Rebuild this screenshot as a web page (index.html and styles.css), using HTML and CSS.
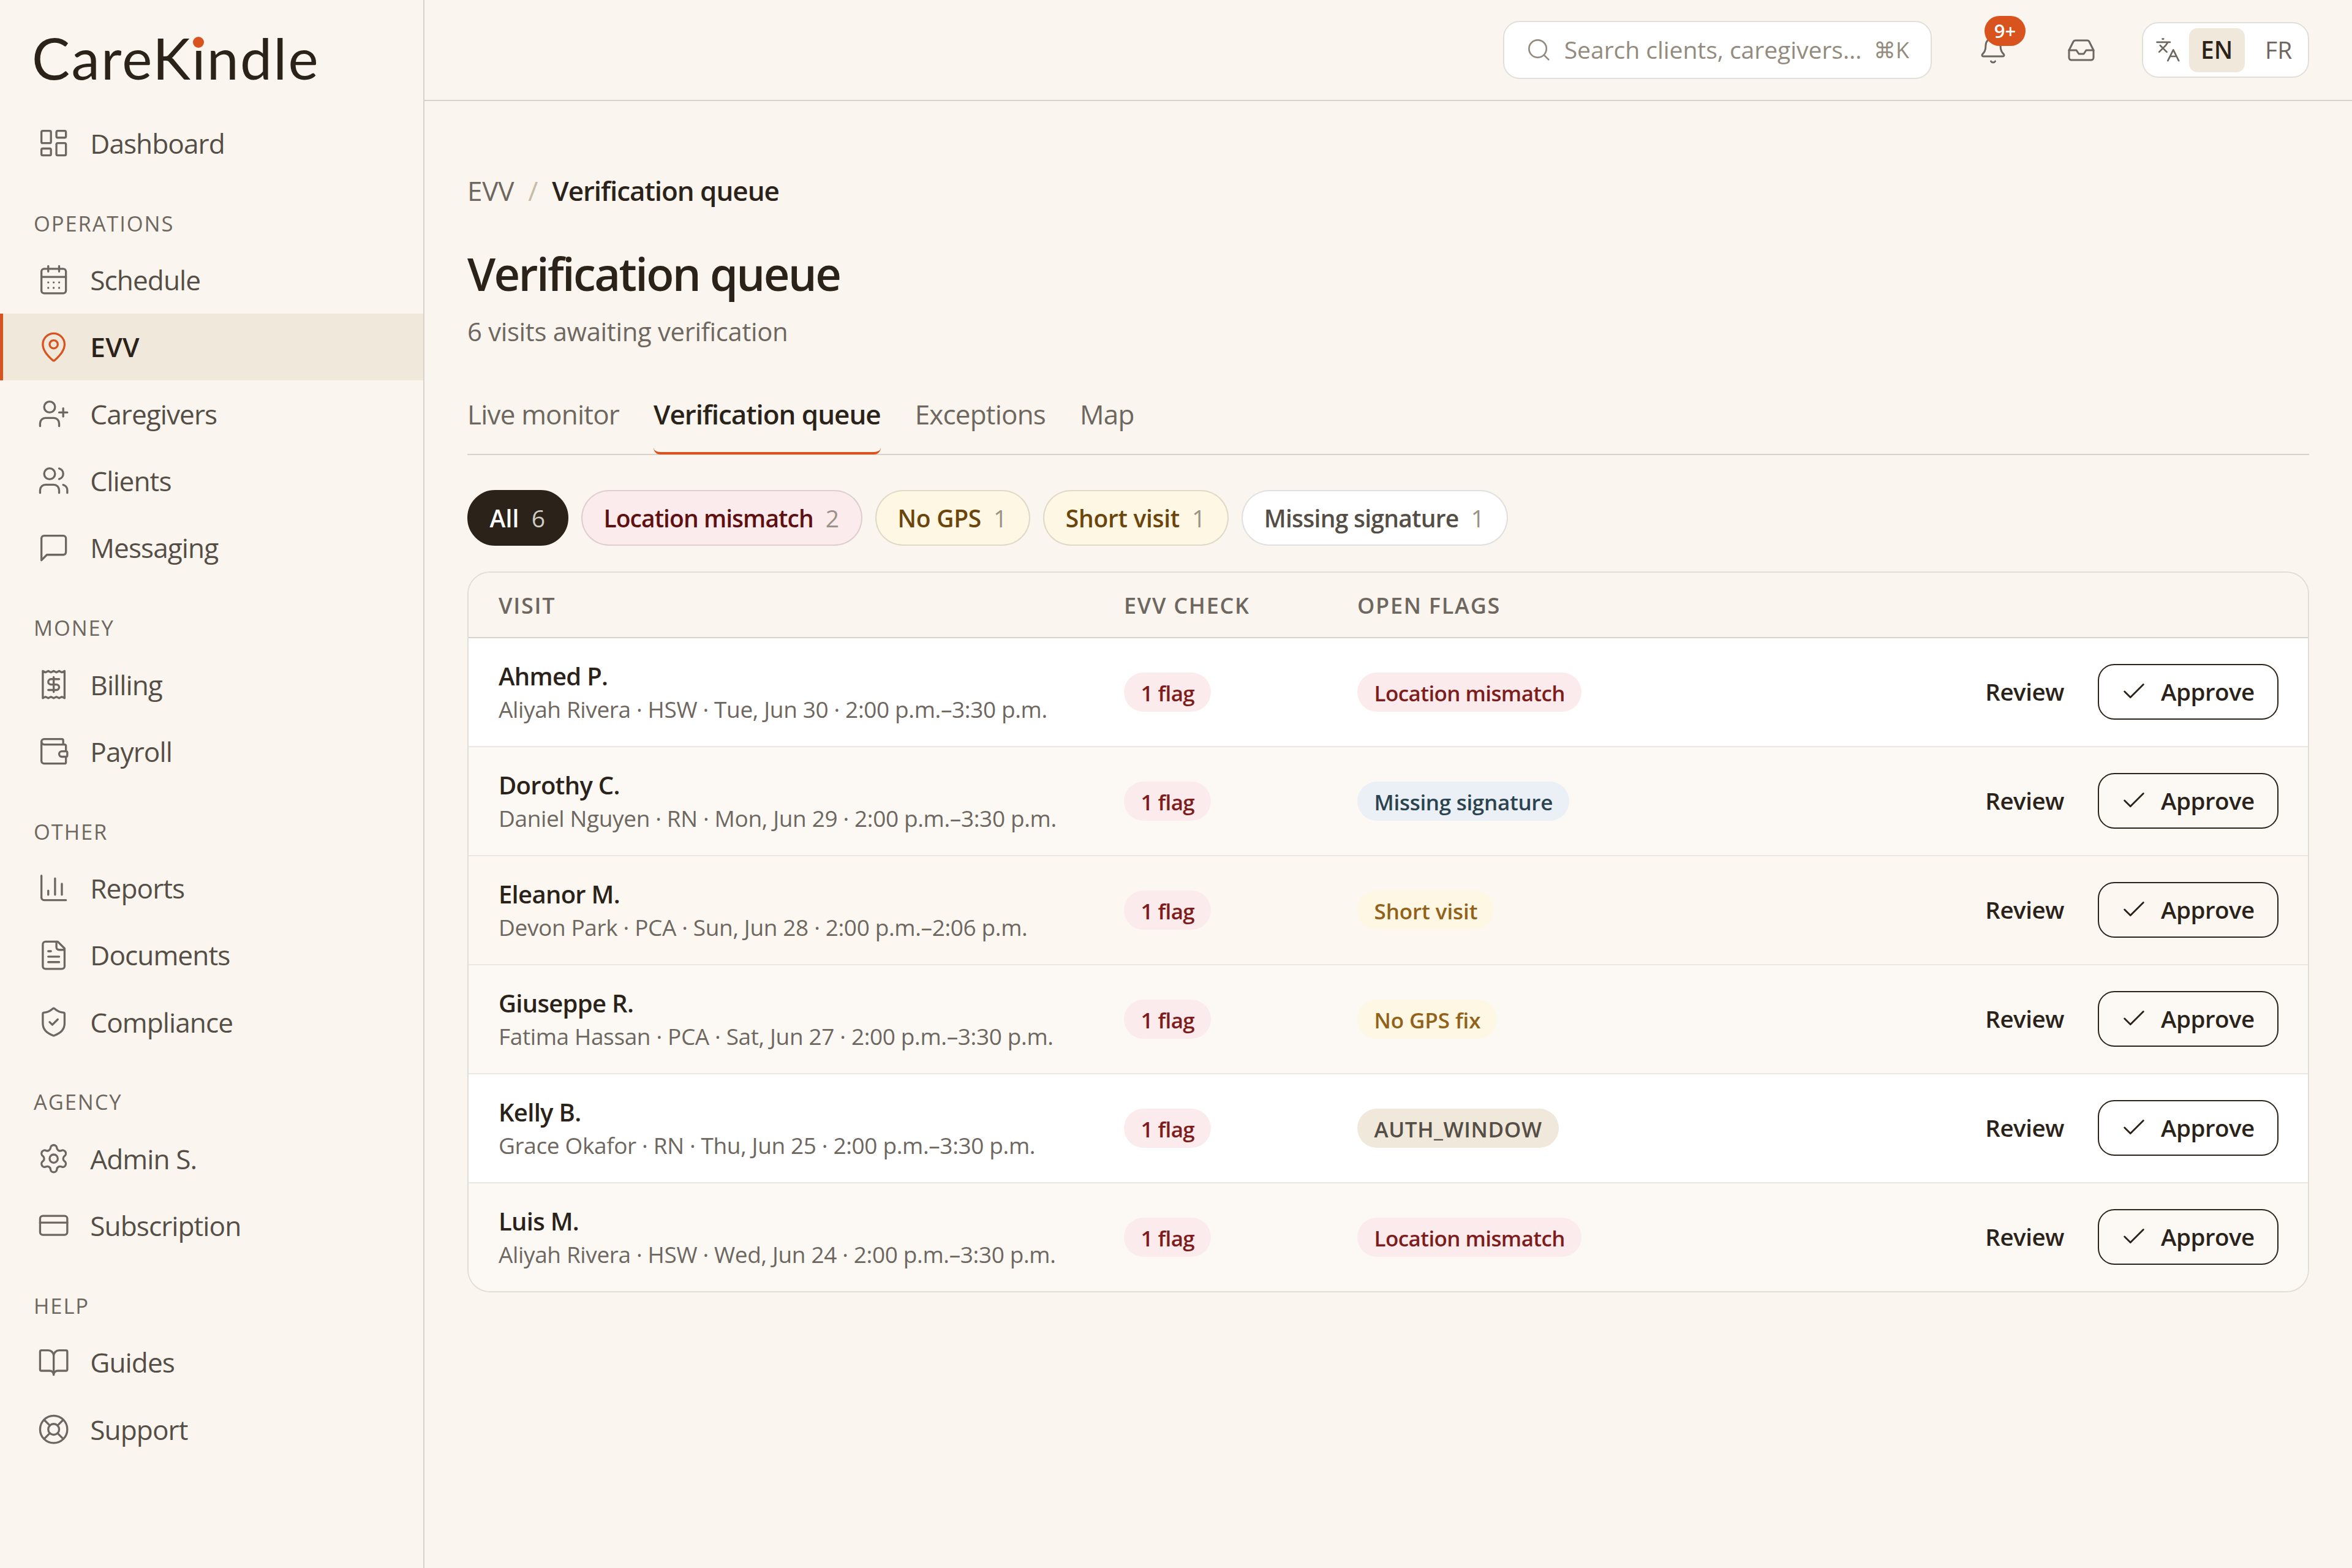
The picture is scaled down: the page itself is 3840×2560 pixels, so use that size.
FILE: index.html
```
<!DOCTYPE html>
<html lang="en">
<head>
<meta charset="utf-8">
<title>CareKindle – Verification queue</title>
<link rel="stylesheet" href="styles.css">
</head>
<body>
<svg class="sprite" aria-hidden="true">
  <symbol id="dashboard" viewBox="0 0 24 24"><rect x="3" y="3" width="7" height="9" rx="1"/><rect x="14" y="3" width="7" height="5" rx="1"/><rect x="14" y="12" width="7" height="9" rx="1"/><rect x="3" y="16" width="7" height="5" rx="1"/></symbol>
  <symbol id="calendar" viewBox="0 0 24 24"><path d="M8 2v4M16 2v4"/><rect x="3" y="4" width="18" height="18" rx="2"/><path d="M3 10h18M8 14h.01M12 14h.01M16 14h.01M8 18h.01M12 18h.01M16 18h.01"/></symbol>
  <symbol id="pin" viewBox="0 0 24 24"><path d="M20 10c0 4.993-5.539 10.193-7.399 11.799a1 1 0 0 1-1.202 0C9.539 20.193 4 14.993 4 10a8 8 0 0 1 16 0"/><circle cx="12" cy="10" r="3"/></symbol>
  <symbol id="user-plus" viewBox="0 0 24 24"><path d="M16 21v-2a4 4 0 0 0-4-4H6a4 4 0 0 0-4 4v2"/><circle cx="9" cy="7" r="4"/><path d="M19 8v6M22 11h-6"/></symbol>
  <symbol id="users" viewBox="0 0 24 24"><path d="M16 21v-2a4 4 0 0 0-4-4H6a4 4 0 0 0-4 4v2"/><circle cx="9" cy="7" r="4"/><path d="M22 21v-2a4 4 0 0 0-3-3.87M16 3.13a4 4 0 0 1 0 7.75"/></symbol>
  <symbol id="message" viewBox="0 0 24 24"><path d="M21 15a2 2 0 0 1-2 2H7l-4 4V5a2 2 0 0 1 2-2h14a2 2 0 0 1 2 2z"/></symbol>
  <symbol id="receipt" viewBox="0 0 24 24"><path d="M4 2v20l2-1 2 1 2-1 2 1 2-1 2 1 2-1 2 1V2l-2 1-2-1-2 1-2-1-2 1-2-1-2 1Z"/><path d="M16 8h-6a2 2 0 1 0 0 4h4a2 2 0 1 1 0 4H8M12 17.5v-11"/></symbol>
  <symbol id="wallet" viewBox="0 0 24 24"><path d="M19 7V4a1 1 0 0 0-1-1H5a2 2 0 0 0 0 4h15a1 1 0 0 1 1 1v4h-3a2 2 0 0 0 0 4h3a1 1 0 0 0 1-1v-2a1 1 0 0 0-1-1"/><path d="M3 5v14a2 2 0 0 0 2 2h15a1 1 0 0 0 1-1v-4"/></symbol>
  <symbol id="chart" viewBox="0 0 24 24"><path d="M3 3v16a2 2 0 0 0 2 2h16M18 17V9M13 17V5M8 17v-3"/></symbol>
  <symbol id="file" viewBox="0 0 24 24"><path d="M15 2H6a2 2 0 0 0-2 2v16a2 2 0 0 0 2 2h12a2 2 0 0 0 2-2V7Z"/><path d="M14 2v4a2 2 0 0 0 2 2h4M10 9H8M16 13H8M16 17H8"/></symbol>
  <symbol id="shield" viewBox="0 0 24 24"><path d="M20 13c0 5-3.5 7.5-7.66 8.95a1 1 0 0 1-.67-.01C7.5 20.5 4 18 4 13V6a1 1 0 0 1 1-1c2 0 4.5-1.2 6.24-2.72a1.17 1.17 0 0 1 1.52 0C14.51 3.81 17 5 19 5a1 1 0 0 1 1 1z"/><path d="m9 12 2 2 4-4"/></symbol>
  <symbol id="gear" viewBox="0 0 24 24"><path d="M9.671 4.136a2.34 2.34 0 0 1 4.659 0 2.34 2.34 0 0 0 3.319 1.915 2.34 2.34 0 0 1 2.33 4.033 2.34 2.34 0 0 0 0 3.831 2.34 2.34 0 0 1-2.33 4.033 2.34 2.34 0 0 0-3.319 1.915 2.34 2.34 0 0 1-4.659 0 2.34 2.34 0 0 0-3.32-1.915 2.34 2.34 0 0 1-2.33-4.033 2.34 2.34 0 0 0 0-3.831A2.34 2.34 0 0 1 6.35 6.051a2.34 2.34 0 0 0 3.319-1.915"/><circle cx="12" cy="12" r="3"/></symbol>
  <symbol id="card" viewBox="0 0 24 24"><rect x="2" y="5" width="20" height="14" rx="2"/><path d="M2 10h20"/></symbol>
  <symbol id="book" viewBox="0 0 24 24"><path d="M12 7v14M3 18a1 1 0 0 1-1-1V4a1 1 0 0 1 1-1h5a4 4 0 0 1 4 4 4 4 0 0 1 4-4h5a1 1 0 0 1 1 1v13a1 1 0 0 1-1 1h-6a3 3 0 0 0-3 3 3 3 0 0 0-3-3z"/></symbol>
  <symbol id="buoy" viewBox="0 0 24 24"><circle cx="12" cy="12" r="10"/><path d="m4.93 4.93 4.24 4.24M14.83 9.17l4.24-4.24M14.83 14.83l4.24 4.24M9.17 14.83l-4.24 4.24"/><circle cx="12" cy="12" r="4"/></symbol>
  <symbol id="search" viewBox="0 0 24 24"><circle cx="11" cy="11" r="8"/><path d="m21 21-4.3-4.3"/></symbol>
  <symbol id="bell" viewBox="0 0 24 24"><path d="M10.268 21a2 2 0 0 0 3.464 0M3.262 15.326A1 1 0 0 0 4 17h16a1 1 0 0 0 .74-1.673C19.41 13.956 18 12.499 18 8A6 6 0 0 0 6 8c0 4.499-1.411 5.956-2.738 7.326"/></symbol>
  <symbol id="inbox" viewBox="0 0 24 24"><path d="M22 12h-6l-2 3h-4l-2-3H2"/><path d="M5.45 5.11 2 12v6a2 2 0 0 0 2 2h16a2 2 0 0 0 2-2v-6l-3.45-6.89A2 2 0 0 0 16.76 4H7.24a2 2 0 0 0-1.79 1.11z"/></symbol>
  <symbol id="languages" viewBox="0 0 24 24"><path d="m5 8 6 6M4 14l6-6 2-3M2 5h12M7 2h1M22 22l-5-10-5 10M14 18h6"/></symbol>
  <symbol id="check" viewBox="0 0 24 24"><path d="M20 6 9 17l-5-5"/></symbol>
</svg>

<div class="app">
  <aside class="sidebar">
    <div class="logo">CareK<span class="logo-i">i</span>ndle</div>
    <nav>
      <a class="nav-item"><svg class="icon"><use href="#dashboard"/></svg>Dashboard</a>
      <h2 class="nav-heading">OPERATIONS</h2>
      <a class="nav-item"><svg class="icon"><use href="#calendar"/></svg>Schedule</a>
      <a class="nav-item active"><svg class="icon"><use href="#pin"/></svg>EVV</a>
      <a class="nav-item"><svg class="icon"><use href="#user-plus"/></svg>Caregivers</a>
      <a class="nav-item"><svg class="icon"><use href="#users"/></svg>Clients</a>
      <a class="nav-item"><svg class="icon"><use href="#message"/></svg>Messaging</a>
      <h2 class="nav-heading">MONEY</h2>
      <a class="nav-item"><svg class="icon"><use href="#receipt"/></svg>Billing</a>
      <a class="nav-item"><svg class="icon"><use href="#wallet"/></svg>Payroll</a>
      <h2 class="nav-heading">OTHER</h2>
      <a class="nav-item"><svg class="icon"><use href="#chart"/></svg>Reports</a>
      <a class="nav-item"><svg class="icon"><use href="#file"/></svg>Documents</a>
      <a class="nav-item"><svg class="icon"><use href="#shield"/></svg>Compliance</a>
      <h2 class="nav-heading">AGENCY</h2>
      <a class="nav-item"><svg class="icon"><use href="#gear"/></svg>Admin S.</a>
      <a class="nav-item"><svg class="icon"><use href="#card"/></svg>Subscription</a>
      <h2 class="nav-heading">HELP</h2>
      <a class="nav-item"><svg class="icon"><use href="#book"/></svg>Guides</a>
      <a class="nav-item"><svg class="icon"><use href="#buoy"/></svg>Support</a>
    </nav>
  </aside>

  <div class="page">
    <header class="topbar">
      <div class="search">
        <svg class="icon"><use href="#search"/></svg>
        <span class="placeholder">Search clients, caregivers…</span>
        <kbd>⌘K</kbd>
      </div>
      <div class="bell"><svg class="icon"><use href="#bell"/></svg><span class="bell-count">9+</span></div>
      <div class="inbox"><svg class="icon"><use href="#inbox"/></svg></div>
      <div class="lang">
        <svg class="icon"><use href="#languages"/></svg>
        <span class="lang-option selected">EN</span>
        <span class="lang-option">FR</span>
      </div>
    </header>

    <main>
      <div class="breadcrumb"><span>EVV</span><span class="slash">/</span><span class="current">Verification queue</span></div>
      <h1>Verification queue</h1>
      <p class="subtitle">6 visits awaiting verification</p>
      <div class="tabs">
        <span class="tab">Live monitor</span>
        <span class="tab current">Verification queue</span>
        <span class="tab">Exceptions</span>
        <span class="tab">Map</span>
      </div>
      <div class="filters">
        <span class="chip chip-all">All<b>6</b></span>
        <span class="chip chip-red">Location mismatch<b>2</b></span>
        <span class="chip chip-yellow">No GPS<b>1</b></span>
        <span class="chip chip-yellow">Short visit<b>1</b></span>
        <span class="chip">Missing signature<b>1</b></span>
      </div>

      <section class="table">
        <div class="row head"><span>VISIT</span><span>EVV CHECK</span><span>OPEN FLAGS</span><span></span></div>
        <div class="row">
          <div class="visit"><strong>Ahmed P.</strong><span>Aliyah Rivera · HSW · Tue, Jun 30 · 2:00 p.m.–3:30 p.m.</span></div>
          <div><span class="badge red">1 flag</span></div>
          <div><span class="badge red">Location mismatch</span></div>
          <div class="actions"><a>Review</a><button><svg class="icon"><use href="#check"/></svg>Approve</button></div>
        </div>
        <div class="row tint">
          <div class="visit"><strong>Dorothy C.</strong><span>Daniel Nguyen · RN · Mon, Jun 29 · 2:00 p.m.–3:30 p.m.</span></div>
          <div><span class="badge red">1 flag</span></div>
          <div><span class="badge blue">Missing signature</span></div>
          <div class="actions"><a>Review</a><button><svg class="icon"><use href="#check"/></svg>Approve</button></div>
        </div>
        <div class="row warm">
          <div class="visit"><strong>Eleanor M.</strong><span>Devon Park · PCA · Sun, Jun 28 · 2:00 p.m.–2:06 p.m.</span></div>
          <div><span class="badge red">1 flag</span></div>
          <div><span class="badge yellow">Short visit</span></div>
          <div class="actions"><a>Review</a><button><svg class="icon"><use href="#check"/></svg>Approve</button></div>
        </div>
        <div class="row tint">
          <div class="visit"><strong>Giuseppe R.</strong><span>Fatima Hassan · PCA · Sat, Jun 27 · 2:00 p.m.–3:30 p.m.</span></div>
          <div><span class="badge red">1 flag</span></div>
          <div><span class="badge yellow">No GPS fix</span></div>
          <div class="actions"><a>Review</a><button><svg class="icon"><use href="#check"/></svg>Approve</button></div>
        </div>
        <div class="row">
          <div class="visit"><strong>Kelly B.</strong><span>Grace Okafor · RN · Thu, Jun 25 · 2:00 p.m.–3:30 p.m.</span></div>
          <div><span class="badge red">1 flag</span></div>
          <div><span class="badge neutral">AUTH_WINDOW</span></div>
          <div class="actions"><a>Review</a><button><svg class="icon"><use href="#check"/></svg>Approve</button></div>
        </div>
        <div class="row tint">
          <div class="visit"><strong>Luis M.</strong><span>Aliyah Rivera · HSW · Wed, Jun 24 · 2:00 p.m.–3:30 p.m.</span></div>
          <div><span class="badge red">1 flag</span></div>
          <div><span class="badge red">Location mismatch</span></div>
          <div class="actions"><a>Review</a><button><svg class="icon"><use href="#check"/></svg>Approve</button></div>
        </div>
      </section>
    </main>
  </div>
</div>
</body>
</html>
```
FILE: styles.css
```
:root {
  --bg: #faf5ee;
  --ink: #2b231a;
  --text: #554e46;
  --muted: #6e675f;
  --faint: #938b7e;
  --line: #d7d2ca;
  --sand: #f0e8da;
  --accent: #d9531e;
}
* { box-sizing: border-box; }
body {
  margin: 0;
  background: var(--bg);
  color: var(--ink);
  font-family: "Open Sans", "Noto Sans", sans-serif;
  font-size: 44px;
}
h1, h2, p { margin: 0; font-weight: 400; }
.sprite { display: none; }
.icon {
  flex: none;
  fill: none;
  stroke: currentColor;
  stroke-width: 1.5;
  stroke-linecap: round;
  stroke-linejoin: round;
}
.app { display: flex; width: 3840px; height: 2560px; }

/* Sidebar */
.sidebar { width: 693px; border-right: 2px solid var(--line); flex: none; }
.logo {
  height: 179.3px;
  padding: 39px 0 0 52px;
  font-family: "Lato", sans-serif;
  font-size: 93px;
  line-height: 110px;
  letter-spacing: 2.3px;
}
.logo-i { position: relative; }
.logo-i::after {
  content: "";
  position: absolute;
  left: 2px;
  top: 22px;
  width: 18px;
  height: 18px;
  border-radius: 50%;
  background: var(--accent);
}
.nav-item {
  display: flex;
  align-items: center;
  gap: 33.5px;
  height: 109.33px;
  padding-left: 55.5px;
  border-left: 5px solid transparent;
  color: var(--text);
  font-size: 44.2px;
  letter-spacing: -0.95px;
}
.nav-item .icon { width: 53.3px; height: 53.3px; color: var(--muted); }
.nav-item.active { background: var(--sand); border-color: var(--accent); color: var(--ink); font-weight: 600; letter-spacing: 0.3px; }
.nav-item.active .icon { color: var(--accent); }
.nav-heading {
  height: 113.8px;
  padding: 52px 0 13px 55px;
  color: var(--muted);
  font-size: 34.5px;
  line-height: 48px;
  letter-spacing: 1.9px;
}

/* Top bar */
.page { flex: 1; min-width: 0; }
.topbar {
  display: flex;
  align-items: center;
  justify-content: flex-end;
  height: 165px;
  padding-right: 70px;
  border-bottom: 2px solid var(--line);
}
.search {
  display: flex;
  align-items: center;
  width: 700px;
  height: 95px;
  padding: 0 35px 0 35px;
  background: #fff;
  border: 2px solid #e2dfda;
  border-radius: 27px;
  color: var(--faint);
  font-size: 39.2px;
}
.search .icon { width: 42.7px; height: 42.7px; margin-right: 20px; }
.placeholder { flex: 1; margin-top: -3px; white-space: nowrap; letter-spacing: -0.1px; }
kbd { font: 36px/48px "Open Sans", "DejaVu Sans", sans-serif; }
.bell { position: relative; display: flex; margin-left: 76px; }
.bell .icon, .inbox .icon { width: 48px; height: 48px; color: var(--muted); }
.bell-count {
  position: absolute;
  left: 10px;
  top: -32px;
  width: 67px;
  height: 49px;
  border-radius: 25px;
  background: var(--accent);
  color: #fff;
  font-size: 31px;
  font-weight: 600;
  line-height: 48px;
  text-align: center;
}
.inbox { display: flex; margin-left: 96px; }
.lang {
  display: flex;
  align-items: center;
  width: 273px;
  height: 91px;
  margin-left: 75px;
  padding-left: 19px;
  background: #fff;
  border: 2px solid #e2dfda;
  border-radius: 27px;
  color: var(--muted);
  font-size: 39px;
}
.lang .icon { width: 42.7px; height: 42.7px; margin-right: 13px; }
.lang-option {
  width: 91px;
  height: 72px;
  border-radius: 14px;
  line-height: 70px;
  text-align: center;
}
.lang-option + .lang-option { margin-left: 10px; }
.lang-option.selected { background: var(--sand); color: var(--ink); font-weight: 600; }

/* Page heading */
main { padding: 116px 70px 0; }
.breadcrumb { display: flex; gap: 23px; height: 60px; line-height: 60px; color: var(--muted); letter-spacing: -0.2px; }
.breadcrumb .slash { color: #c6bba6; }
.breadcrumb .current { color: var(--ink); font-weight: 600; letter-spacing: -1.05px; }
h1 {
  margin-top: 58px;
  font-size: 74px;
  font-weight: 600;
  line-height: 96px;
  letter-spacing: -2.6px;
}
.subtitle { margin-top: 18px; color: var(--muted); font-size: 41.8px; line-height: 56px; letter-spacing: -0.3px; }
.tabs { display: flex; gap: 56px; height: 97px; margin-top: 77px; border-bottom: 2px solid var(--line); }
.tab { height: 96px; line-height: 60px; color: var(--muted); letter-spacing: -0.8px; border-bottom: 4px solid transparent; }
.tab.current { color: var(--ink); font-weight: 600; letter-spacing: -1.05px; border-color: var(--accent); border-radius: 11px; }

/* Filter chips */
.filters { display: flex; gap: 21px; margin-top: 57px; }
.chip {
  display: flex;
  gap: 20px;
  height: 91px;
  padding: 0 36px 0 34.5px;
  border: 2px solid rgba(43, 35, 26, 0.14);
  border-radius: 46px;
  background: #fff;
  color: var(--text);
  font-size: 39px;
  font-weight: 600;
  line-height: 88px;
  letter-spacing: -0.75px;
}
.chip b { font-weight: 500; letter-spacing: 0; color: #9a9286; }
.chip-all { background: var(--ink); border-color: var(--ink); color: #fff; letter-spacing: 0.2px; }
.chip-all b { color: #cfcbc6; }
.chip-red { background: #fcebec; color: #5f1010; letter-spacing: -0.95px; }
.chip-yellow { background: #fdf7e4; color: #6b450c; letter-spacing: -0.3px; }

/* Table */
.table { margin-top: 42px; border: 2px solid #e2ddd5; border-radius: 37px; overflow: hidden; }
.row {
  display: grid;
  grid-template-columns: 1021px 381px 1fr 520px;
  align-items: center;
  height: 178px;
  padding: 0 48px 0 49px;
  background: #fff;
  border-bottom: 2px solid #ebe7e2;
}
.row.tint { background: #fcf9f5; }
.row.warm { background: #fcf7f1; }
.row:last-child { height: 176px; border-bottom: 0; }
.row.head {
  height: 107px;
  padding-top: 2px;
  background: var(--bg);
  border-color: #d8d4cc;
  color: var(--muted);
  font-size: 36px;
  font-weight: 600;
  letter-spacing: 1.75px;
}
.visit { display: flex; flex-direction: column; padding-top: 1px; }
.visit strong { font-size: 40px; font-weight: 600; line-height: 54px; letter-spacing: -0.7px; }
.visit span { color: var(--muted); font-size: 37px; line-height: 54px; letter-spacing: -0.37px; }
.badge {
  display: inline-block;
  height: 64px;
  padding: 3px 27px 0 27.5px;
  border-radius: 32px;
  font-size: 35px;
  font-weight: 600;
  line-height: 62px;
  letter-spacing: -0.6px;
  vertical-align: top;
}
.badge.red { background: #fcebec; color: #7f1d1d; }
.badge.blue { background: #eaf0f6; color: #2c4350; letter-spacing: -0.3px; }
.badge.yellow { background: #fdf7e4; color: #92621a; letter-spacing: -0.1px; }
.badge.neutral { background: var(--sand); color: var(--text); letter-spacing: 0.6px; }
.actions {
  display: flex;
  align-items: center;
  justify-content: flex-end;
  gap: 55px;
  padding-bottom: 2px;
  font-size: 38.5px;
  font-weight: 600;
  letter-spacing: -0.5px;
}
button {
  display: flex;
  align-items: center;
  gap: 21px;
  width: 295px;
  height: 91px;
  padding: 0 0 0 34px;
  background: none;
  border: 2px solid var(--ink);
  border-radius: 27px;
  color: inherit;
  font: inherit;
  letter-spacing: inherit;
}
button .icon { width: 46px; height: 46px; }
```
